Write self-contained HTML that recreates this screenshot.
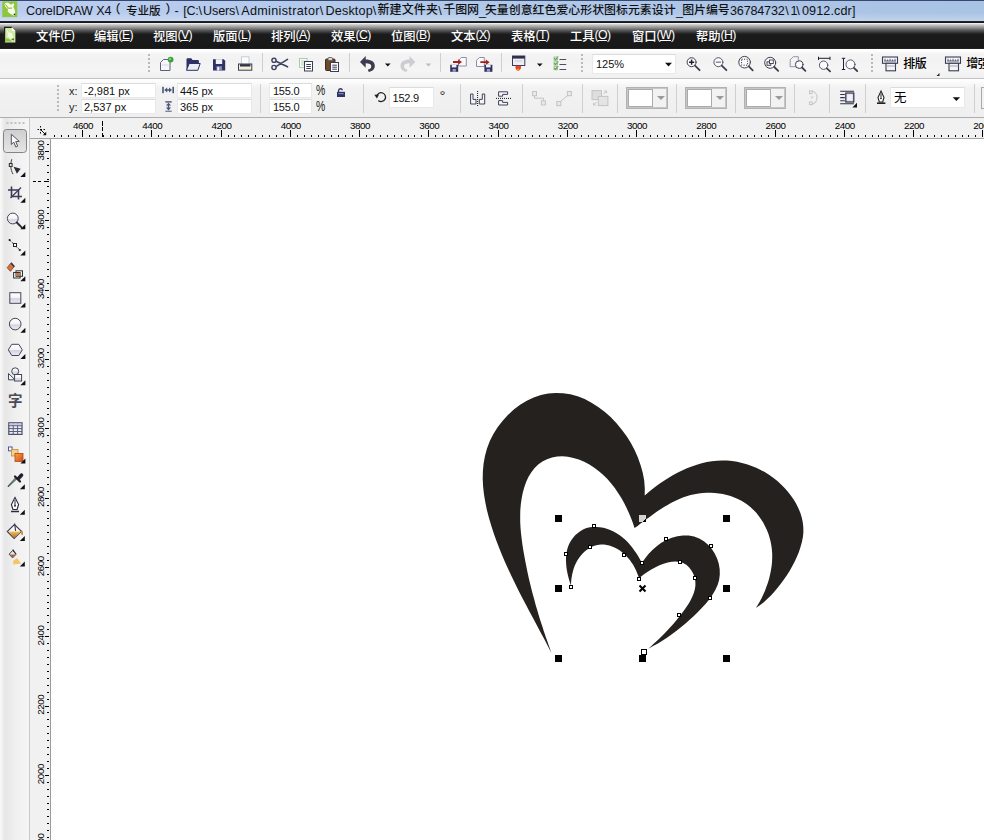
<!DOCTYPE html>
<html lang="zh">
<head>
<meta charset="utf-8">
<title>CorelDRAW X4</title>
<style>
*{box-sizing:border-box;margin:0;padding:0}
html,body{width:984px;height:840px;overflow:hidden;background:#fff}
body{font-family:"Liberation Sans","Noto Sans CJK SC",sans-serif;position:relative;color:#000}
.abs{position:absolute}
#title{left:0;top:0;width:984px;height:22px;background:linear-gradient(180deg,#2b3c5e 0,#3d5076 0.8px,rgba(255,255,255,0) 1.4px,rgba(255,255,255,0) 55%,rgba(255,255,255,.3) 100%),linear-gradient(90deg,#bacdf0,#b2c9ea 40%,#a9c3e4 100%);}
#title span{font-weight:500;position:absolute;top:1.7px;font-size:12.6px;line-height:19px;white-space:nowrap;color:#111}
#menu{left:0;top:21px;width:984px;height:28px;background:linear-gradient(#555 0,#1a1a1a 0.6px,#1a1a1a 1.6px,#f0f0f0 2.4px,#c4c4c4 4px,#8a8a8a 7px,#555 9.5px,#2d2d2d 12px,#1b1b1b 13.5px,#181818 27px,#2a2a2a 28px);}
#menu span{font-weight:500;position:absolute;top:6.5px;font-size:12.3px;line-height:18px;color:#fff;white-space:nowrap}
#tb1{left:0;top:49px;width:984px;height:30px;background:linear-gradient(#fff 0,#fdfdfd 2px,#f4f4f4 5px,#f2f2f2 40%,#f5f5f5 72%,#f1f1f1 100%);border-bottom:1px solid #c2c2c2}
#tb2{left:0;top:79px;width:984px;height:39px;background:linear-gradient(#fff 0,#fbfbfb 3px,#f2f2f2 9px,#efefef 100%);border-bottom:1px solid #adadad}
#lefttb{left:0;top:118px;width:30px;height:722px;background:linear-gradient(90deg,#fafafa 0,#e6e6e6 5px,#efefef 14px,#f5f5f5 28px);border-right:1px solid #c9c9c9}
#rulerh{left:30px;top:118px;width:954px;height:21px;background:#f1f1f1;border-bottom:1px solid #a2a2a2}
#rulerv{left:30px;top:118px;width:21px;height:722px;background:#f1f1f1;border-right:1px solid #9a9a9a}
#corner{left:30px;top:118px;width:21px;height:20px;background:#f1f1f1}
#canvas{left:51px;top:139px;width:932px;height:701px;background:#fff}
.fld{position:absolute;background:#fff;border:1px solid #e9e9e9;border-top-color:#dcdcdc;font-size:11px;line-height:14px;white-space:nowrap;padding-left:2px;color:#111}
.lbl{position:absolute;font-size:11px;line-height:14px;white-space:nowrap;color:#222}
.sep{position:absolute;width:1px;background:#cfcfcf}
.grip{position:absolute;width:2px;background:repeating-linear-gradient(#b9b9b9 0,#b9b9b9 2px,transparent 2px,transparent 4px)}
.dd{position:absolute;width:42px;height:22px;border:1px solid #b2b2b2;background:#f2f2f2;box-shadow:inset 0 0 0 1px #c6c6c6}
.dd i{position:absolute;left:1px;top:1px;width:25px;height:18px;border:1px solid #ababab;background:#fff}
.dd b{position:absolute;left:30px;top:8px;width:0;height:0;border-left:4px solid transparent;border-right:4px solid transparent;border-top:4px solid #9a9a9a}
#menu i{font-style:normal;letter-spacing:-0.7px;position:relative;top:-1.3px;font-weight:400}
.pc{font-size:13px;transform:scale(.8,1.18);transform-origin:left top}
</style>
</head>
<body>
<div id="title" class="abs">
<span style="left:26.0px;font-size:12.6px;letter-spacing:-0.14px">CorelDRAW X4</span>
<span style="left:108.5px;font-size:12px;letter-spacing:-0.02px;top:1.2px">（</span>
<span style="left:126.0px;font-size:11.6px;letter-spacing:-0.10px;top:0.8px">专业版</span>
<span style="left:165.5px;font-size:12px;letter-spacing:-0.02px;top:1.2px">）</span>
<span style="left:174.5px;font-size:12.6px;letter-spacing:-0.20px">-</span>
<span style="left:183.2px;font-size:12.6px;letter-spacing:-0.25px">[C:\</span>
<span style="left:203.0px;font-size:12.6px;letter-spacing:-0.12px">Users</span>
<span style="left:235.6px;font-size:12.6px;letter-spacing:1.50px">\</span>
<span style="left:241.2px;font-size:12.6px;letter-spacing:0.34px">Administrator</span>
<span style="left:319.8px;font-size:12.6px;letter-spacing:1.50px">\</span>
<span style="left:325.5px;font-size:12.6px;letter-spacing:0.16px">Desktop</span>
<span style="left:372.8px;font-size:12.6px;letter-spacing:1.50px">\</span>
<span style="left:377.4px;font-size:12px;letter-spacing:0.16px;top:0.8px">新建文件夹</span>
<span style="left:438.3px;font-size:12.6px;letter-spacing:1.50px">\</span>
<span style="left:443.3px;font-size:12px;letter-spacing:-0.11px;top:0.8px">千图网</span>
<span style="left:479.0px;font-size:12.6px;letter-spacing:-1.02px">_</span>
<span style="left:484.9px;font-size:11.9px;letter-spacing:0.03px;top:0.8px">矢量创意红色爱心形状图标元素设计</span>
<span style="left:676.0px;font-size:12.6px;letter-spacing:-0.82px">_</span>
<span style="left:682.2px;font-size:11.9px;letter-spacing:-0.04px;top:0.8px">图片编号</span>
<span style="left:730.0px;font-size:12.6px;letter-spacing:-0.18px">36784732</span>
<span style="left:785.3px;font-size:12.6px;letter-spacing:1.50px">\</span>
<span style="left:790.5px;font-size:12.6px;letter-spacing:-1.02px">1</span>
<span style="left:796.3px;font-size:12.6px;letter-spacing:1.50px">\</span>
<span style="left:802.0px;font-size:12.6px;letter-spacing:0.11px">0912.cdr]</span>
</div>
<div id="menu" class="abs">
<span style="left:36px">文件<i>(<u>F</u>)</i></span>
<span style="left:94px">编辑<i>(<u>E</u>)</i></span>
<span style="left:153px">视图<i>(<u>V</u>)</i></span>
<span style="left:213px">版面<i>(<u>L</u>)</i></span>
<span style="left:271px">排列<i>(<u>A</u>)</i></span>
<span style="left:331px">效果<i>(<u>C</u>)</i></span>
<span style="left:391px">位图<i>(<u>B</u>)</i></span>
<span style="left:451px">文本<i>(<u>X</u>)</i></span>
<span style="left:511px">表格<i>(<u>T</u>)</i></span>
<span style="left:570px">工具<i>(<u>O</u>)</i></span>
<span style="left:632px">窗口<i>(<u>W</u>)</i></span>
<span style="left:696px">帮助<i>(<u>H</u>)</i></span>
</div>
<div id="tb1" class="abs"></div>
<div id="tb2" class="abs"></div>
<div id="lefttb" class="abs"></div>
<div id="canvas" class="abs"></div>
<div id="rulerv" class="abs"></div>
<div id="rulerh" class="abs"></div>
<div id="corner" class="abs"></div>
<!-- toolbar 1 -->
<div class="grip" style="left:148px;top:54px;height:20px"></div>
<div class="sep" style="left:262px;top:53px;height:19px"></div>
<div class="sep" style="left:349px;top:53px;height:19px"></div>
<div class="sep" style="left:440px;top:53px;height:19px"></div>
<div class="sep" style="left:501px;top:53px;height:19px"></div>
<div class="grip" style="left:581px;top:54px;height:20px"></div>
<div class="fld" style="left:592px;top:54px;width:84px;height:20px;line-height:18px;padding-left:3px;font-size:11px">125%</div>
<div class="grip" style="left:871px;top:54px;height:20px"></div>
<div class="lbl" style="left:903.3px;top:56.5px;font-size:12px;font-weight:500;letter-spacing:-0.5px;color:#000">排版</div>
<div class="lbl" style="left:966.3px;top:56.5px;font-size:12px;font-weight:500;letter-spacing:-0.5px;color:#000">增强</div>
<!-- property bar -->
<div class="grip" style="left:57px;top:85px;height:26px"></div>
<div class="lbl" style="left:69px;top:84px">x:</div>
<div class="lbl" style="left:69px;top:100px">y:</div>
<div class="fld" style="left:81px;top:83px;width:75px;height:15px;line-height:14.6px">-2,981 px</div>
<div class="fld" style="left:81px;top:99px;width:75px;height:15px;line-height:14.6px">2,537 px</div>
<div class="fld" style="left:177px;top:83px;width:75px;height:15px;line-height:14.6px">445 px</div>
<div class="fld" style="left:177px;top:99px;width:75px;height:15px;line-height:14.6px">365 px</div>
<div class="sep" style="left:260px;top:84px;height:29px"></div>
<div class="fld" style="left:269px;top:83px;width:43px;height:15px;line-height:14.6px;padding-left:3px;letter-spacing:-0.25px">155.0</div>
<div class="fld" style="left:269px;top:99px;width:43px;height:15px;line-height:14.6px;padding-left:3px;letter-spacing:-0.25px">155.0</div>
<div class="lbl pc" style="left:316px;top:82px">%</div>
<div class="lbl pc" style="left:316px;top:98.4px">%</div>
<div class="sep" style="left:363px;top:84px;height:29px"></div>
<div class="fld" style="left:389px;top:87px;width:45px;height:21px;line-height:20px;padding-left:2.5px;letter-spacing:-0.2px">152.9</div>
<div class="lbl" style="left:439.4px;top:89px;font-size:15px;color:#333">°</div>
<div class="sep" style="left:460px;top:84px;height:29px"></div>
<div class="sep" style="left:522px;top:84px;height:29px"></div>
<div class="sep" style="left:582px;top:84px;height:29px"></div>
<div class="sep" style="left:617px;top:84px;height:29px"></div>
<div class="dd" style="left:626px;top:87px"><i></i><b></b></div>
<div class="sep" style="left:676px;top:84px;height:29px"></div>
<div class="dd" style="left:685px;top:87px"><i></i><b></b></div>
<div class="sep" style="left:735px;top:84px;height:29px"></div>
<div class="dd" style="left:744px;top:87px"><i></i><b></b></div>
<div class="sep" style="left:794px;top:84px;height:29px"></div>
<div class="sep" style="left:829px;top:84px;height:29px"></div>
<div class="sep" style="left:865px;top:84px;height:29px"></div>
<div class="fld" style="left:890px;top:87px;width:75px;height:21px;line-height:21px;padding-left:3px;font-size:12.5px;color:#000">无</div>
<div class="sep" style="left:974px;top:84px;height:29px"></div>
<div class="abs" style="left:981px;top:87px;width:4px;height:22px;border:1px solid #a9a9a9;background:#f2f2f2"></div>
<!-- left toolbox text tool -->
<div class="lbl" style="left:8px;top:393px;font-size:14.5px;font-weight:bold;color:#4b4b58;line-height:16px">字</div>
<svg class="abs" style="left:0;top:0" width="984" height="840" viewBox="0 0 984 840">
<g shape-rendering="crispEdges" fill="#000">
<rect x="54" y="135" width="1" height="2"/>
<rect x="61" y="135" width="1" height="2"/>
<rect x="68" y="135" width="1" height="2"/>
<rect x="75" y="135" width="1" height="2"/>
<rect x="82" y="130" width="1" height="7"/>
<rect x="89" y="135" width="1" height="2"/>
<rect x="96" y="135" width="1" height="2"/>
<rect x="103" y="135" width="1" height="2"/>
<rect x="110" y="135" width="1" height="2"/>
<rect x="117" y="135" width="1" height="2"/>
<rect x="124" y="135" width="1" height="2"/>
<rect x="131" y="135" width="1" height="2"/>
<rect x="138" y="135" width="1" height="2"/>
<rect x="144" y="135" width="1" height="2"/>
<rect x="151" y="130" width="1" height="7"/>
<rect x="158" y="135" width="1" height="2"/>
<rect x="165" y="135" width="1" height="2"/>
<rect x="172" y="135" width="1" height="2"/>
<rect x="179" y="135" width="1" height="2"/>
<rect x="186" y="135" width="1" height="2"/>
<rect x="193" y="135" width="1" height="2"/>
<rect x="200" y="135" width="1" height="2"/>
<rect x="207" y="135" width="1" height="2"/>
<rect x="214" y="135" width="1" height="2"/>
<rect x="221" y="130" width="1" height="7"/>
<rect x="228" y="135" width="1" height="2"/>
<rect x="234" y="135" width="1" height="2"/>
<rect x="241" y="135" width="1" height="2"/>
<rect x="248" y="135" width="1" height="2"/>
<rect x="255" y="135" width="1" height="2"/>
<rect x="262" y="135" width="1" height="2"/>
<rect x="269" y="135" width="1" height="2"/>
<rect x="276" y="135" width="1" height="2"/>
<rect x="283" y="135" width="1" height="2"/>
<rect x="290" y="130" width="1" height="7"/>
<rect x="297" y="135" width="1" height="2"/>
<rect x="304" y="135" width="1" height="2"/>
<rect x="311" y="135" width="1" height="2"/>
<rect x="318" y="135" width="1" height="2"/>
<rect x="324" y="135" width="1" height="2"/>
<rect x="331" y="135" width="1" height="2"/>
<rect x="338" y="135" width="1" height="2"/>
<rect x="345" y="135" width="1" height="2"/>
<rect x="352" y="135" width="1" height="2"/>
<rect x="359" y="130" width="1" height="7"/>
<rect x="366" y="135" width="1" height="2"/>
<rect x="373" y="135" width="1" height="2"/>
<rect x="380" y="135" width="1" height="2"/>
<rect x="387" y="135" width="1" height="2"/>
<rect x="394" y="135" width="1" height="2"/>
<rect x="401" y="135" width="1" height="2"/>
<rect x="408" y="135" width="1" height="2"/>
<rect x="414" y="135" width="1" height="2"/>
<rect x="421" y="135" width="1" height="2"/>
<rect x="428" y="130" width="1" height="7"/>
<rect x="435" y="135" width="1" height="2"/>
<rect x="442" y="135" width="1" height="2"/>
<rect x="449" y="135" width="1" height="2"/>
<rect x="456" y="135" width="1" height="2"/>
<rect x="463" y="135" width="1" height="2"/>
<rect x="470" y="135" width="1" height="2"/>
<rect x="477" y="135" width="1" height="2"/>
<rect x="484" y="135" width="1" height="2"/>
<rect x="491" y="135" width="1" height="2"/>
<rect x="498" y="130" width="1" height="7"/>
<rect x="505" y="135" width="1" height="2"/>
<rect x="511" y="135" width="1" height="2"/>
<rect x="518" y="135" width="1" height="2"/>
<rect x="525" y="135" width="1" height="2"/>
<rect x="532" y="135" width="1" height="2"/>
<rect x="539" y="135" width="1" height="2"/>
<rect x="546" y="135" width="1" height="2"/>
<rect x="553" y="135" width="1" height="2"/>
<rect x="560" y="135" width="1" height="2"/>
<rect x="567" y="130" width="1" height="7"/>
<rect x="574" y="135" width="1" height="2"/>
<rect x="581" y="135" width="1" height="2"/>
<rect x="588" y="135" width="1" height="2"/>
<rect x="595" y="135" width="1" height="2"/>
<rect x="601" y="135" width="1" height="2"/>
<rect x="608" y="135" width="1" height="2"/>
<rect x="615" y="135" width="1" height="2"/>
<rect x="622" y="135" width="1" height="2"/>
<rect x="629" y="135" width="1" height="2"/>
<rect x="636" y="130" width="1" height="7"/>
<rect x="643" y="135" width="1" height="2"/>
<rect x="650" y="135" width="1" height="2"/>
<rect x="657" y="135" width="1" height="2"/>
<rect x="664" y="135" width="1" height="2"/>
<rect x="671" y="135" width="1" height="2"/>
<rect x="678" y="135" width="1" height="2"/>
<rect x="685" y="135" width="1" height="2"/>
<rect x="692" y="135" width="1" height="2"/>
<rect x="698" y="135" width="1" height="2"/>
<rect x="705" y="130" width="1" height="7"/>
<rect x="712" y="135" width="1" height="2"/>
<rect x="719" y="135" width="1" height="2"/>
<rect x="726" y="135" width="1" height="2"/>
<rect x="733" y="135" width="1" height="2"/>
<rect x="740" y="135" width="1" height="2"/>
<rect x="747" y="135" width="1" height="2"/>
<rect x="754" y="135" width="1" height="2"/>
<rect x="761" y="135" width="1" height="2"/>
<rect x="768" y="135" width="1" height="2"/>
<rect x="775" y="130" width="1" height="7"/>
<rect x="782" y="135" width="1" height="2"/>
<rect x="788" y="135" width="1" height="2"/>
<rect x="795" y="135" width="1" height="2"/>
<rect x="802" y="135" width="1" height="2"/>
<rect x="809" y="135" width="1" height="2"/>
<rect x="816" y="135" width="1" height="2"/>
<rect x="823" y="135" width="1" height="2"/>
<rect x="830" y="135" width="1" height="2"/>
<rect x="837" y="135" width="1" height="2"/>
<rect x="844" y="130" width="1" height="7"/>
<rect x="851" y="135" width="1" height="2"/>
<rect x="858" y="135" width="1" height="2"/>
<rect x="865" y="135" width="1" height="2"/>
<rect x="872" y="135" width="1" height="2"/>
<rect x="878" y="135" width="1" height="2"/>
<rect x="885" y="135" width="1" height="2"/>
<rect x="892" y="135" width="1" height="2"/>
<rect x="899" y="135" width="1" height="2"/>
<rect x="906" y="135" width="1" height="2"/>
<rect x="913" y="130" width="1" height="7"/>
<rect x="920" y="135" width="1" height="2"/>
<rect x="927" y="135" width="1" height="2"/>
<rect x="934" y="135" width="1" height="2"/>
<rect x="941" y="135" width="1" height="2"/>
<rect x="948" y="135" width="1" height="2"/>
<rect x="955" y="135" width="1" height="2"/>
<rect x="962" y="135" width="1" height="2"/>
<rect x="968" y="135" width="1" height="2"/>
<rect x="975" y="135" width="1" height="2"/>
<rect x="982" y="130" width="1" height="7"/>
<rect x="47" y="144" width="2" height="1"/>
<rect x="45" y="151" width="4" height="1"/>
<rect x="47" y="158" width="2" height="1"/>
<rect x="47" y="165" width="2" height="1"/>
<rect x="47" y="172" width="2" height="1"/>
<rect x="47" y="179" width="2" height="1"/>
<rect x="47" y="186" width="2" height="1"/>
<rect x="47" y="193" width="2" height="1"/>
<rect x="47" y="200" width="2" height="1"/>
<rect x="47" y="207" width="2" height="1"/>
<rect x="47" y="213" width="2" height="1"/>
<rect x="45" y="220" width="4" height="1"/>
<rect x="47" y="227" width="2" height="1"/>
<rect x="47" y="234" width="2" height="1"/>
<rect x="47" y="241" width="2" height="1"/>
<rect x="47" y="248" width="2" height="1"/>
<rect x="47" y="255" width="2" height="1"/>
<rect x="47" y="262" width="2" height="1"/>
<rect x="47" y="269" width="2" height="1"/>
<rect x="47" y="276" width="2" height="1"/>
<rect x="47" y="283" width="2" height="1"/>
<rect x="45" y="290" width="4" height="1"/>
<rect x="47" y="297" width="2" height="1"/>
<rect x="47" y="304" width="2" height="1"/>
<rect x="47" y="310" width="2" height="1"/>
<rect x="47" y="317" width="2" height="1"/>
<rect x="47" y="324" width="2" height="1"/>
<rect x="47" y="331" width="2" height="1"/>
<rect x="47" y="338" width="2" height="1"/>
<rect x="47" y="345" width="2" height="1"/>
<rect x="47" y="352" width="2" height="1"/>
<rect x="45" y="359" width="4" height="1"/>
<rect x="47" y="366" width="2" height="1"/>
<rect x="47" y="373" width="2" height="1"/>
<rect x="47" y="380" width="2" height="1"/>
<rect x="47" y="387" width="2" height="1"/>
<rect x="47" y="394" width="2" height="1"/>
<rect x="47" y="401" width="2" height="1"/>
<rect x="47" y="408" width="2" height="1"/>
<rect x="47" y="414" width="2" height="1"/>
<rect x="47" y="421" width="2" height="1"/>
<rect x="45" y="428" width="4" height="1"/>
<rect x="47" y="435" width="2" height="1"/>
<rect x="47" y="442" width="2" height="1"/>
<rect x="47" y="449" width="2" height="1"/>
<rect x="47" y="456" width="2" height="1"/>
<rect x="47" y="463" width="2" height="1"/>
<rect x="47" y="470" width="2" height="1"/>
<rect x="47" y="477" width="2" height="1"/>
<rect x="47" y="484" width="2" height="1"/>
<rect x="47" y="491" width="2" height="1"/>
<rect x="45" y="498" width="4" height="1"/>
<rect x="47" y="505" width="2" height="1"/>
<rect x="47" y="511" width="2" height="1"/>
<rect x="47" y="518" width="2" height="1"/>
<rect x="47" y="525" width="2" height="1"/>
<rect x="47" y="532" width="2" height="1"/>
<rect x="47" y="539" width="2" height="1"/>
<rect x="47" y="546" width="2" height="1"/>
<rect x="47" y="553" width="2" height="1"/>
<rect x="47" y="560" width="2" height="1"/>
<rect x="45" y="567" width="4" height="1"/>
<rect x="47" y="574" width="2" height="1"/>
<rect x="47" y="581" width="2" height="1"/>
<rect x="47" y="588" width="2" height="1"/>
<rect x="47" y="595" width="2" height="1"/>
<rect x="47" y="602" width="2" height="1"/>
<rect x="47" y="608" width="2" height="1"/>
<rect x="47" y="615" width="2" height="1"/>
<rect x="47" y="622" width="2" height="1"/>
<rect x="47" y="629" width="2" height="1"/>
<rect x="45" y="636" width="4" height="1"/>
<rect x="47" y="643" width="2" height="1"/>
<rect x="47" y="650" width="2" height="1"/>
<rect x="47" y="657" width="2" height="1"/>
<rect x="47" y="664" width="2" height="1"/>
<rect x="47" y="671" width="2" height="1"/>
<rect x="47" y="678" width="2" height="1"/>
<rect x="47" y="685" width="2" height="1"/>
<rect x="47" y="692" width="2" height="1"/>
<rect x="47" y="699" width="2" height="1"/>
<rect x="45" y="706" width="4" height="1"/>
<rect x="47" y="712" width="2" height="1"/>
<rect x="47" y="719" width="2" height="1"/>
<rect x="47" y="726" width="2" height="1"/>
<rect x="47" y="733" width="2" height="1"/>
<rect x="47" y="740" width="2" height="1"/>
<rect x="47" y="747" width="2" height="1"/>
<rect x="47" y="754" width="2" height="1"/>
<rect x="47" y="761" width="2" height="1"/>
<rect x="47" y="768" width="2" height="1"/>
<rect x="45" y="775" width="4" height="1"/>
<rect x="47" y="782" width="2" height="1"/>
<rect x="47" y="789" width="2" height="1"/>
<rect x="47" y="796" width="2" height="1"/>
<rect x="47" y="803" width="2" height="1"/>
<rect x="47" y="809" width="2" height="1"/>
<rect x="47" y="816" width="2" height="1"/>
<rect x="47" y="823" width="2" height="1"/>
<rect x="47" y="830" width="2" height="1"/>
<rect x="47" y="837" width="2" height="1"/>
<rect x="102" y="121" width="1" height="5"/><rect x="102" y="127" width="1" height="4"/><rect x="102" y="133" width="1" height="4"/>
<rect x="33" y="181" width="3" height="1"/><rect x="38" y="181" width="3" height="1"/><rect x="44" y="181" width="5" height="1"/>
</g>
<g stroke="#111" stroke-width="1" fill="none"><path d="M37.500 129.500h9" stroke-dasharray="1.500 1.500"/><path d="M40.500 126v9" stroke-dasharray="1.500 1.500"/><path d="M41 130l4.200 4.200"/><path d="M46.200 135.200v-3.400l-3.400 3.400z" fill="#111" stroke="none"/></g>
<g font-family="Liberation Sans, sans-serif" font-size="9.8" fill="#000" text-anchor="middle" letter-spacing="-0.42">
<text x="83.0" y="129">4600</text>
<text x="152.2" y="129">4400</text>
<text x="221.5" y="129">4200</text>
<text x="290.8" y="129">4000</text>
<text x="360.0" y="129">3800</text>
<text x="429.2" y="129">3600</text>
<text x="498.5" y="129">3400</text>
<text x="567.8" y="129">3200</text>
<text x="637.0" y="129">3000</text>
<text x="706.2" y="129">2800</text>
<text x="775.5" y="129">2600</text>
<text x="844.8" y="129">2400</text>
<text x="914.0" y="129">2200</text>
<text x="983.2" y="129">2000</text>
<text transform="translate(43.6 150.4) rotate(-90)">3800</text>
<text transform="translate(43.6 219.7) rotate(-90)">3600</text>
<text transform="translate(43.6 289.0) rotate(-90)">3400</text>
<text transform="translate(43.6 358.3) rotate(-90)">3200</text>
<text transform="translate(43.6 427.6) rotate(-90)">3000</text>
<text transform="translate(43.6 496.9) rotate(-90)">2800</text>
<text transform="translate(43.6 566.2) rotate(-90)">2600</text>
<text transform="translate(43.6 635.5) rotate(-90)">2400</text>
<text transform="translate(43.6 704.8) rotate(-90)">2200</text>
<text transform="translate(43.6 774.1) rotate(-90)">2000</text>
<text transform="translate(43.6 843.4) rotate(-90)">1800</text>
</g>
<!-- title icon -->
<g>
<rect x="2.3" y="1.3" width="15" height="15.8" fill="#8cc63a"/>
<path d="M4.5 4.2c1-1.5 3-1.8 4.5-1l2.2 1.6 1.6-1.3c1-.3 1.6.3 1.4 1.2l-.9 2.3c1.6 2 2.2 5 1.9 8.2l-1.3.6c-2.2-1.3-4.8-2.2-6.3-4.3l.5-2.6c-1.5-.6-3.4-2.2-3.6-4.7z" fill="#f6fbe6"/>
<path d="M5.5 4.5l3 3.8 3.5-.3" stroke="#7fae3a" stroke-width="1" fill="none"/>
<path d="M13.2 14.2l2 1.2.1-2.2z" fill="#2a2a10"/>
</g>
<!-- menu icon -->
<g>
<path d="M4.6 27.4h7.2l3.6 3.6v11.4H4.6z" fill="#cfe9a4"/>
<path d="M4.6 42.4V27.4h7.2" stroke="#1c1c1c" stroke-width="1.2" fill="none"/>
<path d="M11.8 27.4v3.6h3.6z" fill="#fff"/>
<path d="M6 29l3 3.5 2.5.2 2.5 6-3 .5-3.5-3 .4-2.5z" fill="#f2fadc"/>
<path d="M5.2 38l4 1 3 2.5H5.2z" fill="#8cc63a"/>
<path d="M11 39l2.8 1.6.2-2.4z" fill="#3a6a1a"/>
</g>
<!-- toolbar1: new -->
<g>
<path d="M160.5 62.5l3-3h6.5v11h-9.5z" fill="#f7f7fa" stroke="#5b6078" stroke-width="1"/>
<path d="M162 65h6.5" stroke="#d5d5de" stroke-width="1"/>
<circle cx="170.6" cy="59.6" r="2.9" fill="#3aa03a"/>
<circle cx="170" cy="59" r="1.2" fill="#7ed07e"/>
</g>
<!-- open -->
<g>
<path d="M186.5 70V59.5c0-.8.4-1.2 1.2-1.2h3.6l1.2 1.6h5.2c.8 0 1.2.4 1.2 1.2V64h-9z" fill="#2b3262"/>
<path d="M186.5 70.3l2.7-6.8h11l-2.4 6.8z" fill="#ececf3" stroke="#2b3262" stroke-width="1"/>
</g>
<!-- save -->
<g>
<path d="M213 59.2h10.7l1.5 1.5v9.8H213z" fill="#2e3264"/>
<rect x="215.8" y="59.2" width="6.4" height="4.8" fill="#f2f2f8"/>
<rect x="216.5" y="66.2" width="5.4" height="4.3" fill="#8b8fb5"/>
<rect x="217.3" y="67" width="1.8" height="3.5" fill="#f2f2f8"/>
</g>
<!-- print -->
<g>
<rect x="241.5" y="56.8" width="7.5" height="8" fill="#fbfdf8" stroke="#c8cdd8" stroke-width="1"/>
<rect x="238.5" y="64" width="13.3" height="6.2" fill="#f3efd6" stroke="#3a3d55" stroke-width="1"/>
<rect x="240" y="64.2" width="10.4" height="2.3" fill="#2d3048"/>
</g>
<!-- cut -->
<g fill="none" stroke="#3c4160" stroke-width="1.4">
<circle cx="274" cy="60.3" r="2.1"/>
<circle cx="274" cy="67.5" r="2.1"/>
<path d="M276 61.2l11.5 5.6M276 66.6l11.5-7.2" stroke-width="1.6" stroke-linecap="round"/>
</g>
<!-- copy -->
<g>
<rect x="299.5" y="58.5" width="7.5" height="9" fill="#f8fcf8" stroke="#a9c9b0" stroke-width="1"/>
<path d="M301 61h4.5M301 63h4.5M301 65h3" stroke="#b5d3bb" stroke-width="1"/>
<rect x="304.5" y="61.5" width="8" height="9.5" fill="#fdfdfd" stroke="#3a3d55" stroke-width="1"/>
<path d="M306.3 64.5h4.6M306.3 66.5h4.6M306.3 68.5h4.6" stroke="#3a3d55" stroke-width="1"/>
</g>
<!-- paste -->
<g>
<rect x="325.5" y="59" width="9.5" height="11.5" rx="1" fill="#6b4a2c" stroke="#3f2c1a" stroke-width="1"/>
<rect x="328" y="57.5" width="4.5" height="3" rx="1" fill="#d9d9d9" stroke="#555" stroke-width=".8"/>
<rect x="330.5" y="62.5" width="8" height="9" fill="#fdfdfd" stroke="#3a3d55" stroke-width="1"/>
<path d="M332.3 65.2h4.6M332.3 67.2h4.6M332.3 69.2h4.6" stroke="#3a3d55" stroke-width="1"/>
</g>
<!-- undo -->
<g>
<path d="M360 61.900l5.700-5.900v3.600c5.200 0 9.100 2.200 9.100 6.300 0 3.500-2.900 5.700-6.300 5.800l-.6-2.100c2.100-.2 3.400-1.500 3.400-3.300 0-2.200-2.100-3-5.600-3v4.500z" fill="#3b3d4f"/>
<path d="M385 63.500h5.600l-2.800 3z" fill="#111"/>
</g>
<!-- redo (disabled) -->
<g>
<path d="M415.300 61.900l-5.700-5.900v3.600c-5.200 0-9.100 2.200-9.100 6.300 0 3.500 2.900 5.700 6.300 5.800l.6-2.100c-2.100-.2-3.400-1.500-3.400-3.300 0-2.200 2.100-3 5.600-3v4.500z" fill="#cdcdd1"/>
<path d="M425.600 63.500h5.600l-2.800 3z" fill="#bdbdbd"/>
</g>
<!-- import -->
<g>
<path d="M458.500 60.300l2.800-2.800h5v8.500h-7.800z" fill="#fbfbfd" stroke="#8e90a2" stroke-width="1"/>
<path d="M453 61.100h5.200v-1.900l3.800 2.800-3.800 2.800v-1.900H453z" fill="#a3211a"/>
<rect x="450.200" y="64.800" width="8" height="7" fill="#2e3264"/>
<rect x="451.800" y="64.800" width="4.600" height="2.600" fill="#f2f2f8"/>
<rect x="452.600" y="69" width="3.200" height="2.800" fill="#9a9cc0"/>
</g>
<!-- export -->
<g>
<path d="M476.500 60.300l2.800-2.800h5v9h-7.800z" fill="#fbfbfd" stroke="#8e90a2" stroke-width="1"/>
<path d="M480.300 61.300h5.500v-1.900l3.800 2.800-3.800 2.800v-1.900h-5.500z" fill="#a3211a"/>
<rect x="484.400" y="64.800" width="8" height="7" fill="#2e3264"/>
<rect x="486" y="64.800" width="4.600" height="2.600" fill="#f2f2f8"/>
<rect x="486.800" y="69" width="3.200" height="2.800" fill="#9a9cc0"/>
</g>
<!-- app launcher -->
<g>
<rect x="512.500" y="56" width="12.300" height="9.500" fill="#eeeef6" stroke="#3a3d55" stroke-width="1"/>
<rect x="512.500" y="56" width="12.300" height="2.600" fill="#2d3048"/>
<path d="M515 61h7.500" stroke="#c9c9d8" stroke-width="1"/>
<path d="M515.500 66.500c.6-1.200 1.800-1.200 2.700-.3.900-1.200 2.300-.8 2.800.4.400 1.400-.3 3.200-2.700 4.400-2.200-.900-3.400-2.800-2.800-4.500z" fill="#e2452a"/>
<path d="M517.200 69c.5-.8 1.400-.7 1.900 0 .2.900-.4 1.600-1.100 2-.700-.400-1.100-1.200-.8-2z" fill="#f7a22e"/>
<path d="M537 63.500h5.600l-2.800 3z" fill="#111"/>
</g>
<!-- options checklist -->
<g fill="none">
<path d="M554.300 58.200l1.300 1.600 2.600-3.300M554.300 63l1.300 1.600 2.600-3.300M554.300 67.800l1.300 1.600 2.600-3.300" stroke="#4f9a3f" stroke-width="1.050"/>
<rect x="554" y="57" width="3.600" height="3.200" stroke="#7fb070" stroke-width=".7"/>
<rect x="554" y="61.800" width="3.600" height="3.200" stroke="#7fb070" stroke-width=".7"/>
<rect x="554" y="66.600" width="3.600" height="3.200" stroke="#7fb070" stroke-width=".7"/>
<path d="M559.500 59.500h6.700M559.500 64.500h6.700M559.500 69.500h6.700" stroke="#4a4d65" stroke-width="1"/>
</g>
<!-- zoom combo arrow -->
<path d="M665 62.800h7l-3.500 3.700z" fill="#111"/>
<!-- zoom icons -->
<g fill="none" stroke="#3d3f4c" stroke-linecap="round">
<circle cx="691.6" cy="62.2" r="4.5" stroke-width="1" fill="#fbfbfd"/>
<path d="M695 65.700l4.600 4.500" stroke-width="1.800"/>
<path d="M689 62.200h5.200M691.600 59.600v5.200" stroke="#1e2030" stroke-width="1.500" stroke-linecap="butt"/>
<circle cx="718.4" cy="62.2" r="4.500" stroke-width="1" fill="#fbfbfd" stroke="#55586a"/>
<path d="M721.800 65.700l4.600 4.500" stroke-width="1.800"/>
<path d="M715.800 62.200h5.200" stroke="#8d8f9d" stroke-width="1.500" stroke-linecap="butt"/>
<circle cx="744.6" cy="62.2" r="5.800" stroke-width="1" fill="#fbfbfd"/>
<path d="M748.800 66.400l3.900 3.900" stroke-width="1.800"/>
<rect x="741.600" y="59.200" width="6" height="6" stroke="#222" stroke-width="1" stroke-dasharray="1 1.500" stroke-linecap="butt"/>
<circle cx="770.2" cy="62.8" r="5.500" stroke-width="1" fill="#fbfbfd"/>
<path d="M774.300 67l3.900 3.900" stroke-width="1.800"/>
<rect x="767" y="61.800" width="3.800" height="3.500" stroke-width=".9" fill="#e6e6ee"/>
<rect x="769.500" y="60" width="3.800" height="3.500" stroke-width=".9" fill="#fff"/>
<!-- zoom page -->
<path d="M790.500 59.500l2.800-2.800h5v10h-7.800z" stroke="#9395a5" stroke-width="1" fill="#f4f4f8"/>
<circle cx="799.2" cy="64.6" r="3.800" stroke-width="1" fill="#fbfbfd"/>
<path d="M802 67.500l3.400 3.400" stroke-width="1.800"/>
<!-- zoom width -->
<path d="M818.500 58.300h11.500M818.500 56.700v3.300M830 56.700v3.300" stroke="#1e2030" stroke-width="1" stroke-linecap="butt"/>
<circle cx="823.6" cy="65.2" r="4.200" stroke-width="1" fill="#fbfbfd" stroke="#55586a"/>
<path d="M826.800 68.400l3.300 3" stroke-width="1.800"/>
<!-- zoom height -->
<path d="M843.500 58.300v11.200M841.800 58.300h3.400M841.800 69.500h3.400" stroke="#1e2030" stroke-width="1" stroke-linecap="butt"/>
<circle cx="850.5" cy="64.4" r="4.500" stroke-width="1" fill="#fbfbfd" stroke="#55586a"/>
<path d="M853.900 67.800l3.300 3.200" stroke-width="1.800"/>
</g>
<!-- layout icons -->
<g id="layic" fill="none" stroke="#3a3d55" stroke-width="1.100">
<rect x="882.500" y="57" width="15" height="6.300" fill="#f3f3f8"/>
<path d="M885 60.800v-2M887.500 60.800v-1.300M890 60.800v-2M892.500 60.800v-1.300M895 60.800v-2M884 61h12" stroke-width=".8"/>
<rect x="886" y="63.300" width="9.500" height="7.500" fill="#f3f3f8"/>
<path d="M886 66h9.500" stroke="#8d8fa0" stroke-width=".8"/>
</g>
<use href="#layic" x="63"/>
<path d="M939.500 73v3h-3z" fill="#222"/>
<!-- property bar icons -->
<g fill="#4b5578">
<rect x="162.200" y="86.800" width="1.600" height="6.400"/>
<rect x="172.400" y="86.800" width="1.600" height="6.400"/>
<path d="M164.200 90l3-2.600v1.900h1.800v-1.900l3 2.600-3 2.600v-1.900h-1.800v1.900z"/>
<rect x="165.300" y="101.200" width="6.400" height="1.400"/>
<rect x="165.300" y="110.600" width="6.400" height="1.400" fill="#7c84a3"/>
<path d="M168.500 102.800l2.600 2.800h-1.900v2h1.900l-2.600 2.800-2.600-2.800h1.900v-2h-1.900z"/>
</g>
<!-- lock -->
<g>
<path d="M338.600 92v-1.400c0-2.400 3.600-2.400 3.600-.3" stroke="#2e3264" stroke-width="1.300" fill="none"/>
<rect x="337" y="91.800" width="8" height="5.200" fill="#2e3264"/>
<rect x="338.300" y="93" width="5.400" height="1.200" fill="#7c84b3"/>
</g>
<!-- rotate -->
<g fill="none" stroke="#222" stroke-width="1.300">
<path d="M376.800 96.300a4.400 4.400 0 1 1 1.500 4.200"/>
<path d="M374.300 94.700l2.600 3.700 2.200-3.800z" fill="#222" stroke="none"/>
</g>
<!-- mirror -->
<g fill="#f6f6fa" stroke="#3f4258" stroke-width="1">
<path d="M470.600 94h2.400v5.400h3v4.600h-5.400z"/>
<path d="M484.700 94h-2.400v5.400h-3v4.600h5.400z"/>
<path d="M498.600 91.800h9v2.600h-5v1.800h-4z"/>
<path d="M498.600 105h9v-2.600h-5v-1.800h-4z"/>
</g>
<path d="M477.600 91v15.500" stroke="#111" stroke-width="1" stroke-dasharray="1 1" fill="none"/>
<path d="M496 98.400h15.500" stroke="#111" stroke-width="1" stroke-dasharray="1 1" fill="none"/>
<!-- disabled icons -->
<g fill="#e9e9e9" stroke="#c4c4c4" stroke-width="1">
<path d="M534.500 95.800v2.400h9v2.500" fill="none"/>
<rect x="532.500" y="91.500" width="4" height="4.200"/>
<rect x="541.400" y="100.800" width="4" height="4.200"/>
<path d="M560.500 101.500l7.200-6" fill="none"/>
<rect x="556.800" y="101.500" width="4" height="4.200"/>
<rect x="567.400" y="91.500" width="4" height="4.200"/>
<rect x="592" y="90.600" width="9.500" height="9" fill="#dedede"/>
<rect x="598.300" y="96.400" width="9.600" height="9.200" fill="#e4e4e4"/>
<path d="M603.500 94l3-3M606.500 93.200v-2.200h-2.200M596.500 102l-3 3M593.500 102.800v2.200h2.200" fill="none"/>
<path d="M811 90.800c8 .5 8 13 0 13.400" fill="none" stroke="#cdcdcd" stroke-width="1.300"/>
<rect x="809.500" y="91" width="2.600" height="2.600" fill="#f4f4f4"/>
<rect x="809.500" y="102" width="2.600" height="2.600" fill="#f4f4f4"/>
<path d="M810 96.500h4l-2 2.500z" fill="#d5d5d5" stroke="none"/>
</g>
<!-- wrap text -->
<g>
<path d="M840.200 91.300h13.800M840.200 94.500h4.600M840.200 97.600h4.600M840.200 100.700h4.600M840.200 103.800h13.800" stroke="#2d3048" stroke-width="1.100" fill="none"/>
<rect x="845.800" y="93" width="8" height="9" fill="#d9d9ea" stroke="#2d3048" stroke-width="1.200"/>
<rect x="847.300" y="94.500" width="5" height="6" fill="#f1f1f8"/>
<path d="M857 102.800v4.600h-4.600z" fill="#111"/>
</g>
<!-- outline pen -->
<g>
<path d="M881 91l3 6.500-1.300 4.500h-3.400l-1.300-4.500z" fill="#fff" stroke="#222" stroke-width="1.100"/>
<path d="M881 93.500v4" stroke="#222" stroke-width="1"/>
<circle cx="881" cy="98.300" r=".9" fill="#222"/>
<path d="M877 103.200h8.400" stroke="#222" stroke-width="1.600"/>
</g>
<path d="M952.700 97.300h7.400l-3.700 3.700z" fill="#111"/>
<defs>
<linearGradient id="gl" x1="0" y1="0" x2="0" y2="1"><stop offset="0" stop-color="#fff"/><stop offset=".5" stop-color="#f4f4f8"/><stop offset=".55" stop-color="#d4d4e2"/><stop offset="1" stop-color="#ececf4"/></linearGradient>
<linearGradient id="gp" x1="0" y1="0" x2="0" y2="1"><stop offset="0" stop-color="#cfcfcf"/><stop offset="1" stop-color="#e6e6e6"/></linearGradient>
<linearGradient id="go" x1="0" y1="0" x2="1" y2="1"><stop offset="0" stop-color="#f7a83a"/><stop offset="1" stop-color="#d8421f"/></linearGradient>
<linearGradient id="gb" x1="0" y1="0" x2="0" y2="1"><stop offset="0" stop-color="#f1c060"/><stop offset="1" stop-color="#b86a18"/></linearGradient>
<path id="fly" d="M5 0v5H0z" fill="#111"/>
</defs>
<!-- grip -->
<g fill="#c2c2c2"><rect x="6.500" y="122" width="2" height="2"/><rect x="10.500" y="122" width="2" height="2"/><rect x="14.500" y="122" width="2" height="2"/><rect x="18.500" y="122" width="2" height="2"/><rect x="22.500" y="122" width="2" height="2"/></g>
<!-- pick tool -->
<rect x="3.500" y="129.500" width="23" height="23" rx="3" fill="url(#gp)" stroke="#858585" stroke-width="1"/>
<path d="M11.300 134.200v10.300l2.500-2.300 2 4.800 1.900-.8-2-4.600 3.600-.2z" fill="#fafafa" stroke="#55565f" stroke-width="1" stroke-linejoin="round"/>
<!-- shape tool -->
<g>
<path d="M11.800 159.200c-1.500 5-1.500 10 1.200 15" fill="none" stroke="#444" stroke-width="1"/>
<rect x="9.300" y="163.600" width="2.800" height="2.800" fill="#fff" stroke="#222" stroke-width="1"/>
<path d="M13.600 166.800l7 2-3.700 5z" fill="#2a2c3a"/>
<use href="#fly" x="20.300" y="172"/>
</g>
<!-- crop tool -->
<g fill="none" stroke="#3a3d55" stroke-width="1.600">
<path d="M11.500 186.500v10h10.500"/>
<path d="M8 190h10.500v9.500"/>
<path d="M10.500 198l10.500-10.500" stroke-width="1.200"/>
</g>
<use href="#fly" x="20.300" y="197.800"/>
<!-- zoom tool -->
<circle cx="12.800" cy="218.500" r="5.400" fill="url(#gl)" stroke="#444654" stroke-width="1"/>
<path d="M16.800 222.500l4.600 4.600" stroke="#2a2c3a" stroke-width="2" stroke-linecap="round"/>
<use href="#fly" x="20.300" y="224.300"/>
<!-- freehand -->
<g>
<path d="M9.600 240l10.200 10" stroke="#333" stroke-width="1" stroke-dasharray="2 1"/>
<circle cx="9.600" cy="240" r="1.100" fill="#222"/>
<circle cx="19.800" cy="250" r="1.100" fill="#222"/>
<rect x="13.500" y="243.500" width="3" height="3" fill="#fff" stroke="#222" stroke-width="1"/>
<use href="#fly" x="20.300" y="250.500"/>
</g>
<!-- smart fill -->
<g>
<path d="M10.500 263.500l3.300 3.400-3.400 4.400-3.200-3.600z" fill="#d9743a" stroke="#7a3a1a" stroke-width=".8"/>
<path d="M11 262.800l3.500 4" stroke="#2d3048" stroke-width="1.300"/>
<rect x="13.600" y="272.500" width="6.500" height="5.500" fill="#f6f6f6" stroke="#333" stroke-width="1"/>
<rect x="16" y="270.800" width="6.500" height="5.500" fill="none" stroke="#333" stroke-width="1"/>
<rect x="16.500" y="273" width="3.200" height="3" fill="#c9743a"/>
<use href="#fly" x="20.300" y="276.200"/>
</g>
<!-- rectangle -->
<rect x="9.800" y="292.700" width="11" height="10.600" fill="url(#gl)" stroke="#444654" stroke-width="1"/>
<use href="#fly" x="20.400" y="302.600"/>
<!-- ellipse -->
<circle cx="15.200" cy="324.100" r="5.800" fill="url(#gl)" stroke="#444654" stroke-width="1"/>
<use href="#fly" x="20.400" y="327.800"/>
<!-- polygon -->
<path d="M8.300 349.900l3.500-5.600h7l3.500 5.600-3.500 5.600h-7z" fill="url(#gl)" stroke="#444654" stroke-width="1"/>
<use href="#fly" x="20.400" y="354"/>
<!-- basic shapes -->
<g stroke="#444654" stroke-width="1">
<circle cx="15.200" cy="371.300" r="3.500" fill="url(#gl)"/>
<path d="M8.500 373.500v6.300h6.500z" fill="#f4f4f8"/>
<rect x="14.600" y="374.500" width="7" height="6.500" fill="url(#gl)"/>
</g>
<use href="#fly" x="20.400" y="380.300"/>
<!-- table -->
<g>
<rect x="8.800" y="422.800" width="13.200" height="11.600" fill="#ecebf5" stroke="#4a4d6a" stroke-width="1.200"/>
<path d="M13.200 422.800v11.600M17.600 422.800v11.600M8.800 425.700h13.200M8.800 428.600h13.200M8.800 431.500h13.200" stroke="#5a5d7a" stroke-width="1"/>
<rect x="9.400" y="423.400" width="12" height="1.700" fill="#c9c8dc"/>
</g>
<!-- blend -->
<g>
<rect x="8.500" y="447" width="3.600" height="3.800" fill="#fff" stroke="#4a5a9a" stroke-width="1"/>
<rect x="11.500" y="449.500" width="6.500" height="6.500" fill="#f6cf8e" stroke="#c98a3a" stroke-width=".8"/>
<rect x="15" y="453.500" width="8" height="8" fill="url(#go)" stroke="#b04a18" stroke-width=".8"/>
<use href="#fly" x="20.400" y="458.600"/>
</g>
<!-- eyedropper -->
<g>
<path d="M16.600 479l-7.600 7.200-1 .6.400-1.200 7-7.600z" fill="#7fa090" stroke="#3a4a45" stroke-width=".9"/>
<path d="M15 476.500l5 5" stroke="#1e2030" stroke-width="2.200" stroke-linecap="round"/>
<path d="M17.500 477.800l3.200-3.600c1-1 2.700.5 1.800 1.600l-3.300 3.500z" fill="#1e2030" stroke="#1e2030" stroke-width="1.200"/>
<use href="#fly" x="19.800" y="484.300"/>
</g>
<!-- outline pen -->
<g>
<path d="M15 497.500l3.600 7-1.500 5h-4.200l-1.500-5z" fill="#fff" stroke="#2a2c3a" stroke-width="1.100"/>
<path d="M15 500v5" stroke="#2a2c3a" stroke-width="1"/>
<circle cx="15" cy="505.800" r="1" fill="#2a2c3a"/>
<path d="M11 511.500h8" stroke="#2a2c3a" stroke-width="1.500"/>
<use href="#fly" x="19.800" y="509.800"/>
</g>
<!-- fill bucket -->
<g>
<path d="M14.400 524.500l7 6.800-7.300 7.200-6.800-7z" fill="#fbfbfb" stroke="#3a3d55" stroke-width="1.100"/>
<path d="M8.300 531.500h12.800l-7 6.600z" fill="url(#gb)"/>
<path d="M14.600 523.500l1 7.500" stroke="#3a3d55" stroke-width="1.200"/>
<path d="M21 531c1.300.3 1.500 2.500.8 3.800" stroke="#c87820" stroke-width="1.500" fill="none"/>
<use href="#fly" x="19.800" y="536"/>
</g>
<!-- interactive fill -->
<g>
<path d="M12.600 550.500l3.600 3.600-3.600 3.800-3.400-3.700z" fill="#efe6e0" stroke="#4a3a3a" stroke-width="1"/>
<path d="M10 554.500h6l-3.300 3z" fill="#9a6a4a"/>
<path d="M12.800 549.500l3 4.500" stroke="#2d3048" stroke-width="1.200"/>
<path d="M13 561l4-3 4.200 5.500-7.800 1z" fill="#f3c665"/>
<use href="#fly" x="19.800" y="561.600"/>
</g>
<path fill="#25211e" d="M551.4 652.9L547.7 645.8L544.1 638.8L540.4 631.9L536.7 624.9L533.0 618.1L529.3 611.2L525.7 604.3L522.1 597.4L518.5 590.5L515.1 583.6L511.7 576.6L508.4 569.6L505.2 562.5L502.1 555.3L499.2 548.0L496.3 540.6L493.7 533.2L491.2 525.5L488.9 517.8L486.9 510.1L485.3 502.3L484.0 494.4L483.1 486.6L482.7 478.8L482.9 471.0L483.6 463.4L485.0 455.8L487.0 448.4L489.8 441.1L493.4 434.1L497.6 427.3L502.5 420.9L507.9 415.0L513.8 409.6L520.1 404.8L526.8 400.8L533.7 397.5L540.9 395.1L548.2 393.6L555.6 393.0L563.0 393.2L570.3 394.3L577.6 396.3L584.7 399.1L591.5 402.7L598.2 406.9L604.6 411.7L610.6 417.1L616.3 423.0L621.6 429.4L626.5 436.1L630.9 443.1L634.7 450.3L638.0 457.8L640.7 465.4L642.8 473.0L644.2 480.6L644.8 488.2L644.7 495.6L644.7 495.6L648.2 492.5L651.8 489.5L655.7 486.5L659.8 483.5L664.0 480.7L668.3 477.9L672.8 475.3L677.4 472.8L682.1 470.5L686.9 468.3L691.8 466.4L696.8 464.7L701.8 463.2L706.8 462.1L711.9 461.2L717.0 460.7L722.1 460.5L727.1 460.6L732.1 461.1L737.1 461.8L742.0 462.9L746.8 464.2L751.6 465.9L756.2 467.8L760.7 469.9L765.1 472.3L769.4 475.0L773.5 477.9L777.4 481.0L781.1 484.4L784.6 487.9L787.9 491.7L791.0 495.7L793.8 499.8L796.3 504.1L798.5 508.5L800.4 513.1L801.8 517.8L802.8 522.5L803.3 527.3L803.4 532.2L802.9 537.1L801.9 542.1L800.5 547.0L798.9 551.9L796.9 556.8L794.7 561.6L792.2 566.3L789.6 570.9L786.7 575.4L783.7 579.8L780.6 584.1L777.4 588.1L774.1 592.0L770.7 595.7L767.2 599.1L763.5 602.4L759.8 605.3L755.9 608.0L755.9 608.0L757.9 604.8L759.8 601.4L761.7 597.9L763.4 594.2L765.1 590.5L766.5 586.6L767.9 582.7L769.1 578.7L770.1 574.6L770.9 570.5L771.6 566.3L772.0 562.2L772.2 558.0L772.2 553.9L771.9 549.7L771.4 545.7L770.6 541.6L769.6 537.7L768.4 533.8L766.9 530.0L765.2 526.4L763.3 522.8L761.2 519.5L758.9 516.2L756.5 513.1L753.8 510.3L750.9 507.6L747.9 505.1L744.7 502.8L741.4 500.8L737.9 499.0L734.3 497.5L730.6 496.1L726.8 495.0L722.9 494.1L719.0 493.4L714.9 493.0L710.9 492.8L706.8 492.8L702.7 493.1L698.7 493.5L694.6 494.2L690.6 495.1L686.6 496.3L682.7 497.6L678.8 499.2L675.0 500.9L671.3 502.8L667.6 504.9L664.0 507.1L660.5 509.3L657.0 511.6L653.6 514.0L650.3 516.4L647.0 518.8L643.8 521.2L640.6 523.6L637.6 525.9L634.5 528.1L634.5 528.1L632.9 523.1L631.0 518.1L628.9 513.0L626.5 507.8L624.0 502.8L621.2 497.8L618.1 492.9L614.8 488.1L611.2 483.5L607.4 479.1L603.3 475.0L598.9 471.2L594.3 467.7L589.4 464.5L584.2 461.8L578.9 459.6L573.4 457.9L567.9 456.7L562.5 456.3L557.1 456.6L552.0 457.5L547.0 459.2L542.4 461.6L538.2 464.6L534.4 468.2L531.2 472.4L528.4 477.0L526.1 482.1L524.2 487.4L522.7 493.0L521.6 498.7L520.8 504.5L520.3 510.3L520.2 516.0L520.2 521.8L520.5 527.5L521.0 533.2L521.7 538.9L522.4 544.6L523.3 550.2L524.3 555.8L525.3 561.3L526.4 566.8L527.5 572.3L528.7 577.7L530.0 583.2L531.3 588.6L532.7 594.0L534.2 599.3L535.6 604.7L537.2 610.1L538.8 615.4L540.4 620.7L542.2 626.1L543.9 631.4L545.7 636.8L547.6 642.1L549.5 647.5L551.4 652.9Z"/>
<path fill="#25211e" d="M571.0 585.6L569.9 582.5L568.9 579.1L568.0 575.7L567.2 572.1L566.6 568.5L566.2 564.8L566.0 561.1L566.0 557.4L566.4 553.8L567.0 550.2L568.0 546.8L569.4 543.6L571.1 540.5L573.1 537.7L575.4 535.1L577.9 532.9L580.6 530.9L583.5 529.3L586.6 528.1L589.8 527.3L593.1 526.9L596.5 526.9L599.9 527.2L603.4 527.8L606.8 528.8L610.2 530.0L613.5 531.5L616.6 533.3L619.7 535.2L622.6 537.4L625.3 539.8L627.8 542.3L630.2 545.0L632.4 547.8L634.5 550.7L636.5 553.6L638.4 556.6L640.2 559.7L641.9 562.8L641.9 562.8L645.0 558.4L648.5 554.1L652.4 550.0L656.7 546.2L661.3 542.8L666.4 540.0L671.8 537.8L677.4 536.3L683.1 535.5L688.7 535.6L694.1 536.5L699.2 538.4L703.9 541.2L708.1 544.7L711.7 548.8L714.7 553.5L717.1 558.5L718.8 563.8L719.7 569.2L719.8 574.7L719.1 580.0L717.6 585.1L715.3 590.0L712.5 594.8L709.2 599.5L705.5 603.9L701.5 608.2L697.4 612.4L693.3 616.4L689.1 620.3L684.9 624.0L680.6 627.6L676.2 631.0L671.8 634.3L667.3 637.4L662.7 640.5L657.9 643.4L653.1 646.1L648.2 648.8L648.2 648.8L651.1 646.2L653.9 643.6L656.8 640.9L659.7 638.2L662.5 635.4L665.4 632.5L668.2 629.5L671.0 626.5L673.7 623.4L676.4 620.3L679.0 617.1L681.5 613.8L684.0 610.5L686.4 607.1L688.6 603.7L690.6 600.2L692.4 596.6L693.8 593.0L694.8 589.4L695.4 585.7L695.4 581.9L694.8 578.1L693.5 574.3L691.6 570.7L689.2 567.4L686.3 564.8L683.1 563.0L679.5 561.9L675.7 561.5L671.7 561.7L667.7 562.5L663.6 563.7L659.5 565.3L655.5 567.2L651.7 569.3L648.1 571.5L644.7 573.8L641.7 576.0L639.0 578.2L639.0 578.2L638.1 575.5L637.1 572.9L636.0 570.3L634.7 567.7L633.3 565.1L631.7 562.7L630.0 560.3L628.1 558.0L626.2 555.9L624.0 553.9L621.8 552.0L619.5 550.3L617.0 548.8L614.5 547.5L612.0 546.4L609.3 545.5L606.7 544.9L604.1 544.5L601.4 544.5L598.8 544.7L596.2 545.2L593.7 546.0L591.2 547.0L588.9 548.4L586.6 549.9L584.4 551.7L582.4 553.7L580.5 555.9L578.8 558.2L577.3 560.6L575.9 563.2L574.7 565.8L573.7 568.6L572.9 571.4L572.2 574.2L571.7 577.1L571.3 580.0L571.1 582.8L571.0 585.6Z"/>
<g shape-rendering="crispEdges">
<rect x="555" y="515" width="7" height="7" fill="#000"/>
<rect x="555" y="585" width="7" height="7" fill="#000"/>
<rect x="555" y="655" width="7" height="7" fill="#000"/>
<rect x="639" y="515" width="7" height="7" fill="#d4d4d4"/>
<rect x="639" y="655" width="7" height="7" fill="#000"/>
<rect x="723" y="515" width="7" height="7" fill="#000"/>
<rect x="723" y="585" width="7" height="7" fill="#000"/>
<rect x="723" y="655" width="7" height="7" fill="#000"/>
<rect x="564.5" y="552.5" width="3" height="3" fill="#fff" stroke="#000" stroke-width="1"/>
<rect x="592.5" y="524.5" width="3" height="3" fill="#fff" stroke="#000" stroke-width="1"/>
<rect x="640.5" y="561.5" width="3" height="3" fill="#fff" stroke="#000" stroke-width="1"/>
<rect x="664.5" y="537.5" width="3" height="3" fill="#fff" stroke="#000" stroke-width="1"/>
<rect x="709.5" y="544.5" width="3" height="3" fill="#fff" stroke="#000" stroke-width="1"/>
<rect x="708.5" y="596.5" width="3" height="3" fill="#fff" stroke="#000" stroke-width="1"/>
<rect x="677.5" y="613.5" width="3" height="3" fill="#fff" stroke="#000" stroke-width="1"/>
<rect x="693.5" y="576.5" width="3" height="3" fill="#fff" stroke="#000" stroke-width="1"/>
<rect x="678.5" y="560.5" width="3" height="3" fill="#fff" stroke="#000" stroke-width="1"/>
<rect x="637.5" y="577.5" width="3" height="3" fill="#fff" stroke="#000" stroke-width="1"/>
<rect x="622.5" y="553.5" width="3" height="3" fill="#fff" stroke="#000" stroke-width="1"/>
<rect x="588.5" y="545.5" width="3" height="3" fill="#fff" stroke="#000" stroke-width="1"/>
<rect x="569.5" y="585.5" width="3" height="3" fill="#fff" stroke="#000" stroke-width="1"/>
<path d="M646 518.400v3.600h-4z" fill="#000"/>
<rect x="641.5" y="649.5" width="5" height="5" fill="#fff" stroke="#000" stroke-width="1"/>
</g>
<path d="M639.5 585.5l6 6M645.5 585.5l-6 6" stroke="#000" stroke-width="2" fill="none"/>
</svg>
</body>
</html>
